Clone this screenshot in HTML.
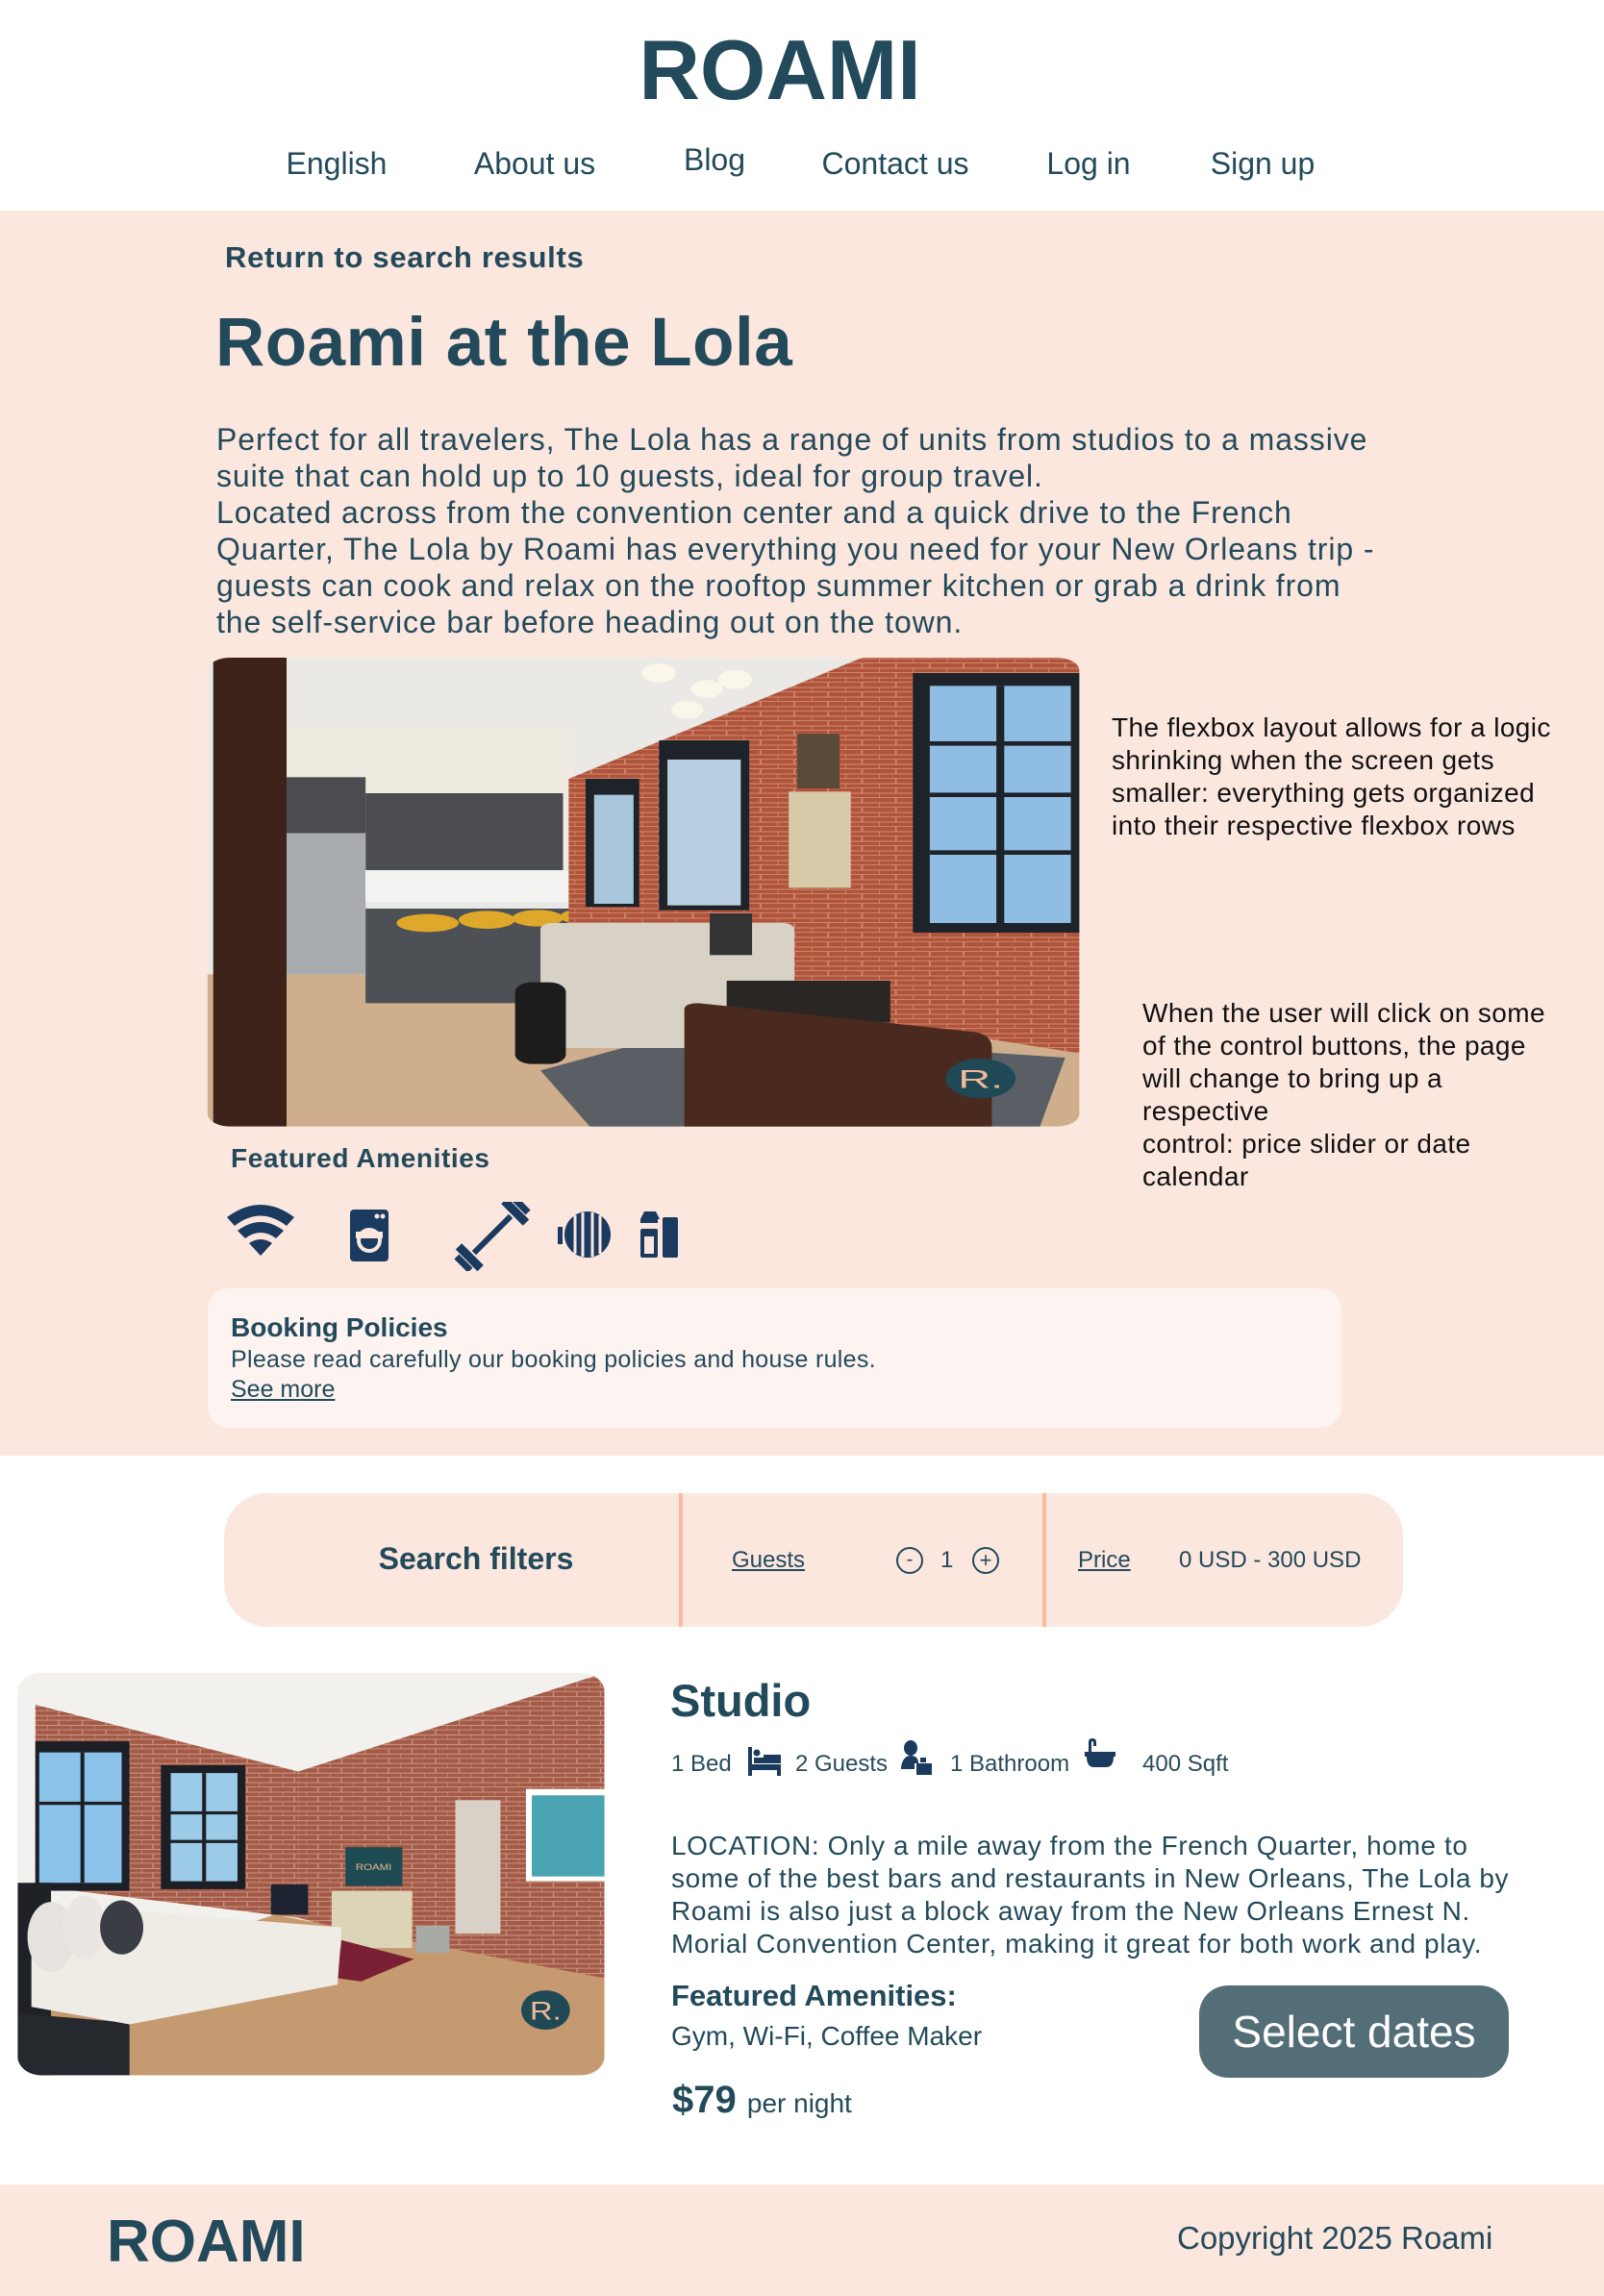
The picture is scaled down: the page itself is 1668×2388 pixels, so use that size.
<!DOCTYPE html>
<html><head><meta charset="utf-8"><style>
*{margin:0;padding:0;box-sizing:border-box}
body{width:1668px;height:2388px;position:relative;background:#fff;font-family:"Liberation Sans",sans-serif;color:#234a5a;overflow:hidden}
.a{position:absolute;white-space:nowrap}
.c{transform:translateX(-50%)}
.nav{font-size:32px;top:152px}
.b{font-weight:bold}
</style></head><body>
<div class="a c b" style="left:811px;top:22px;font-size:88px;color:#234a5a;letter-spacing:0px">ROAMI</div>
<div class="a c nav" style="left:350px">English</div>
<div class="a c nav" style="left:556px">About us</div>
<div class="a c nav" style="left:743px;top:148px">Blog</div>
<div class="a c nav" style="left:931px">Contact us</div>
<div class="a c nav" style="left:1132px">Log in</div>
<div class="a c nav" style="left:1313px">Sign up</div>

<div class="a" style="left:0;top:219px;width:1668px;height:1295px;background:#fce7df"></div>
<div class="a b" style="left:234px;top:250px;font-size:31px;letter-spacing:0.7px">Return to search results</div>
<div class="a b" style="left:224px;top:316px;font-size:71px;letter-spacing:0.5px">Roami at the Lola</div>
<div class="a" style="left:225px;top:438px;font-size:32px;line-height:38px;letter-spacing:0.9px">Perfect for all travelers, The Lola has a range of units from studios to a massive<br>suite that can hold up to 10 guests, ideal for group travel.<br>Located across from the convention center and a quick drive to the French<br>Quarter, The Lola by Roami has everything you need for your New Orleans trip -<br>guests can cook and relax on the rooftop summer kitchen or grab a drink from<br>the self-service bar before heading out on the town.</div>

<svg class="a" style="left:210px;top:680px" width="920" height="500" viewBox="0 0 1568 1500" preserveAspectRatio="none">
<defs><clipPath id="c1"><rect x="10" y="12" width="1545" height="1463" rx="40"/></clipPath>
<pattern id="br" width="60" height="30" patternUnits="userSpaceOnUse"><rect width="60" height="30" fill="#b0553c"/><path d="M0 29H60M30 0V15M0 15H60M0 15V30" stroke="#d08a70" stroke-width="3"/></pattern></defs>
<g clip-path="url(#c1)">
<rect width="1568" height="1500" fill="#ebe9e5"/>
<rect x="150" y="230" width="510" height="770" fill="#f0ebe0"/>
<rect x="150" y="385" width="140" height="175" fill="#4a4c50"/>
<rect x="290" y="435" width="350" height="240" fill="#4a4c50"/>
<rect x="148" y="560" width="142" height="440" fill="#a9acae"/>
<rect x="290" y="675" width="360" height="105" fill="#f2f2f0"/>
<polygon points="0,1000 1568,1000 1568,1500 0,1500" fill="#cfae8d"/>
<rect x="290" y="780" width="420" height="310" fill="#4d5054"/>
<rect x="290" y="775" width="420" height="20" fill="#e8e8e6"/>
<ellipse cx="400" cy="840" rx="55" ry="28" fill="#e0a82a"/><ellipse cx="505" cy="830" rx="50" ry="28" fill="#e0a82a"/><ellipse cx="595" cy="825" rx="45" ry="26" fill="#e0a82a"/><ellipse cx="675" cy="820" rx="40" ry="24" fill="#e0a82a"/>
<polygon points="650,390 1170,12 1568,12 1568,1250 1210,1150 650,1000" fill="url(#br)"/>
<rect x="680" y="390" width="95" height="400" fill="#1e232a"/><rect x="695" y="440" width="70" height="340" fill="#a9c6dc"/>
<rect x="810" y="270" width="160" height="530" fill="#1e232a"/><rect x="825" y="330" width="130" height="455" fill="#b7cfe0"/>
<rect x="1260" y="60" width="300" height="810" fill="#1e232a"/><rect x="1290" y="100" width="250" height="740" fill="#8fbde3"/>
<path d="M1415 100V840M1290 280H1540M1290 440H1540M1290 620H1540" stroke="#1e232a" stroke-width="14"/>
<rect x="1040" y="430" width="110" height="300" fill="#d8c9a8"/>
<rect x="1055" y="250" width="75" height="170" fill="#5a4a3a"/>
<rect x="20" y="12" width="130" height="1463" fill="#3d2219"/>
<polygon points="600,1300 850,1180 1530,1260 1480,1500 700,1500" fill="#5a5f66"/>
<rect x="600" y="840" width="450" height="390" rx="20" fill="#d8d2c6"/>
<rect x="900" y="810" width="75" height="130" fill="#333"/>
<rect x="555" y="1025" width="90" height="255" rx="30" fill="#1c1c1c"/>
<rect x="930" y="1020" width="290" height="130" fill="#2a2624"/>
<path d="M855 1500V1110Q855 1090 880 1090L1370 1180Q1400 1190 1400 1230V1500Z" fill="#4a2a1e"/>
<circle cx="810" cy="60" r="30" fill="#fbf6ea"/><circle cx="945" cy="80" r="30" fill="#fbf6ea"/><circle cx="895" cy="110" r="28" fill="#fbf6ea"/><circle cx="860" cy="175" r="28" fill="#fbf6ea"/>
<circle cx="1380" cy="1325" r="62" fill="#1f4a55"/>
<text x="1380" y="1355" font-family="Liberation Sans" font-size="80" fill="#f2b89a" text-anchor="middle">R.</text>
</g></svg>

<div class="a" style="left:1156px;top:740px;font-size:28px;line-height:34px;color:#111;letter-spacing:0.4px">The flexbox layout allows for a logic<br>shrinking when the screen gets<br>smaller: everything gets organized<br>into their respective flexbox rows</div>
<div class="a" style="left:1188px;top:1037px;font-size:28px;line-height:34px;color:#111;letter-spacing:0.4px">When the user will click on some<br>of the control buttons, the page<br>will change to bring up a<br>respective<br>control: price slider or date<br>calendar</div>

<div class="a b" style="left:240px;top:1189px;font-size:28px;letter-spacing:0.6px">Featured Amenities</div>
<svg class="a" style="left:230px;top:1250px" width="520" height="72" viewBox="0 0 520 72" fill="#1b3a60">
<path d="M6 16Q41 -10 76 16L68 25Q41 4 14 25Z"/><path d="M17 30Q41 12 65 30L57 38Q41 26 25 38Z"/><path d="M29 43Q41 35 53 43L41 56Z"/>
<rect x="134" y="8" width="40" height="54" rx="4"/><circle cx="154" cy="40" r="13" fill="#fce7df"/><circle cx="154" cy="40" r="9"/><rect x="140" y="31" width="28" height="7" fill="#fce7df"/><circle cx="162" cy="15" r="2.5" fill="#fce7df"/><circle cx="168" cy="15" r="2.5" fill="#fce7df"/>
<g transform="rotate(-45 282 34)"><rect x="255" y="31" width="54" height="6"/><rect x="244" y="18" width="9" height="32"/><rect x="236" y="24" width="7" height="20"/><rect x="311" y="18" width="9" height="32"/><rect x="321" y="24" width="7" height="20"/></g>
<circle cx="381" cy="34" r="24"/><path d="M368 14V54M376 11V57M386 11V57M394 14V54" stroke="#fce7df" stroke-width="3"/><rect x="350" y="26" width="5" height="18"/>
<path d="M440 10H452L456 18H436Z"/><rect x="436" y="18" width="18" height="4"/><rect x="436" y="28" width="18" height="30" rx="2"/><rect x="440" y="36" width="10" height="18" fill="#fce7df"/><rect x="459" y="16" width="16" height="42" rx="2"/>
</svg>

<div class="a" style="left:216px;top:1340px;width:1179px;height:145px;background:#fdf3f0;border-radius:22px"></div>
<div class="a b" style="left:240px;top:1365px;font-size:28px">Booking Policies</div>
<div class="a" style="left:240px;top:1400px;font-size:25px;letter-spacing:0.3px">Please read carefully our booking policies and house rules.</div>
<div class="a" style="left:240px;top:1431px;font-size:25px;text-decoration:underline">See more</div>

<div class="a" style="left:233px;top:1553px;width:1226px;height:139px;background:#fce7df;border-radius:45px"></div>
<div class="a" style="left:706px;top:1553px;width:4px;height:139px;background:#f8bb9b"></div>
<div class="a" style="left:1084px;top:1553px;width:4px;height:139px;background:#f8bb9b"></div>
<div class="a c b" style="left:495px;top:1603px;font-size:32px">Search filters</div>
<div class="a" style="left:761px;top:1609px;font-size:24px;text-decoration:underline">Guests</div>
<div class="a" style="left:932px;top:1609px;width:28px;height:28px;border:2px solid #234a5a;border-radius:50%;font-size:20px;line-height:23px;text-align:center">-</div>
<div class="a" style="left:978px;top:1609px;font-size:24px">1</div>
<div class="a" style="left:1011px;top:1609px;width:28px;height:28px;border:2px solid #234a5a;border-radius:50%;font-size:22px;line-height:23px;text-align:center">+</div>
<div class="a" style="left:1121px;top:1609px;font-size:24px;text-decoration:underline">Price</div>
<div class="a" style="left:1226px;top:1609px;font-size:24px">0 USD - 300 USD</div>

<svg class="a" style="left:0;top:1730px" width="640" height="440" viewBox="0 0 1568 1330" preserveAspectRatio="none">
<defs><clipPath id="c2"><rect x="45" y="30" width="1495" height="1265" rx="60"/></clipPath>
<pattern id="br2" width="60" height="30" patternUnits="userSpaceOnUse"><rect width="60" height="30" fill="#a45a46"/><path d="M0 29H60M30 0V15M0 15H60M0 15V30" stroke="#c99a88" stroke-width="3"/></pattern></defs>
<g clip-path="url(#c2)">
<rect width="1568" height="1330" fill="#f2f1ee"/>
<polygon points="90,130 760,340 760,800 90,700" fill="url(#br2)"/>
<polygon points="760,340 1540,30 1540,990 1000,880 760,800" fill="url(#br2)"/>
<rect x="90" y="245" width="240" height="470" fill="#1c2026"/><rect x="100" y="280" width="210" height="410" fill="#8cc3ea"/>
<rect x="410" y="320" width="215" height="390" fill="#1c2026"/><rect x="435" y="345" width="170" height="340" fill="#9ccbea"/>
<path d="M210 280V690M100 440H310M520 345V685M435 470H605M435 560H605" stroke="#1c2026" stroke-width="10"/>
<polygon points="45,1050 700,790 1540,990 1540,1330 45,1330" fill="#c59a70"/>
<rect x="690" y="695" width="95" height="95" fill="#1c2230"/>
<rect x="880" y="578" width="145" height="122" fill="#1e4a52"/>
<text x="952" y="650" font-family="Liberation Sans" font-size="28" fill="#e8b89a" text-anchor="middle">ROAMI</text>
<rect x="845" y="715" width="205" height="180" fill="#ddd4b8"/>
<rect x="1060" y="825" width="85" height="85" fill="#a8aaa6"/>
<rect x="1160" y="430" width="115" height="420" fill="#d9d1c7"/>
<rect x="1340" y="395" width="200" height="290" fill="#fff"/><rect x="1355" y="415" width="185" height="255" fill="#4aa3b0"/>
<polygon points="870,870 1055,930 920,1000 860,990" fill="#7a2035"/>
<rect x="45" y="690" width="85" height="605" fill="#1e2226"/>
<polygon points="45,1100 330,1130 330,1330 45,1330" fill="#25282c"/>
<polygon points="80,840 355,780 870,830 860,1010 330,1135 80,1080" fill="#efece6"/>
<ellipse cx="130" cy="860" rx="60" ry="110" fill="#e6e2de"/><ellipse cx="215" cy="830" rx="55" ry="100" fill="#ebe6e2"/><ellipse cx="310" cy="830" rx="55" ry="85" fill="#3a3e44"/>
<circle cx="1390" cy="1090" r="62" fill="#1f4a55"/>
<text x="1390" y="1120" font-family="Liberation Sans" font-size="80" fill="#f2b89a" text-anchor="middle">R.</text>
</g></svg>

<div class="a b" style="left:697px;top:1741px;font-size:47px">Studio</div>
<div class="a" style="left:698px;top:1821px;font-size:24px;color:#2a4a5a">1 Bed</div>
<svg class="a" style="left:778px;top:1815px" width="36" height="32" viewBox="0 0 36 32" fill="#1b3a60"><rect x="0" y="2" width="4" height="30"/><circle cx="9" cy="8" r="3.5"/><rect x="6" y="13" width="10" height="6"/><rect x="16" y="10" width="18" height="9"/><rect x="0" y="20" width="34" height="6"/><rect x="30" y="20" width="4" height="12"/></svg>
<div class="a" style="left:827px;top:1821px;font-size:24px;color:#2a4a5a">2 Guests</div>
<svg class="a" style="left:935px;top:1810px" width="36" height="36" viewBox="0 0 36 36" fill="#1b3a60"><ellipse cx="12" cy="8" rx="7" ry="8"/><path d="M2 28Q4 16 12 16Q20 16 20 24H16V30H2Z"/><rect x="18" y="24" width="16" height="12"/><rect x="22" y="18" width="6" height="5"/></svg>
<div class="a" style="left:988px;top:1821px;font-size:24px;color:#2a4a5a">1 Bathroom</div>
<svg class="a" style="left:1128px;top:1808px" width="32" height="32" viewBox="0 0 32 32" fill="#1b3a60"><path d="M4 4Q4 0 8 0Q12 0 12 4V8H9V4Q9 3 8 3Q7 3 7 4V14H4Z"/><rect x="0" y="14" width="32" height="5"/><path d="M2 19H30Q30 30 22 30H10Q2 30 2 19Z"/></svg>
<div class="a" style="left:1188px;top:1821px;font-size:24px;color:#2a4a5a">400 Sqft</div>

<div class="a" style="left:698px;top:1903px;font-size:28px;line-height:34px;letter-spacing:0.6px">LOCATION: Only a mile away from the French Quarter, home to<br>some of the best bars and restaurants in New Orleans, The Lola by<br>Roami is also just a block away from the New Orleans Ernest N.<br>Morial Convention Center, making it great for both work and play.</div>
<div class="a b" style="left:698px;top:2058px;font-size:31px">Featured Amenities:</div>
<div class="a" style="left:698px;top:2102px;font-size:28px">Gym, Wi-Fi, Coffee Maker</div>
<div class="a" style="left:1247px;top:2065px;width:322px;height:96px;background:#546e78;border-radius:30px;color:#fff;font-size:46px;text-align:center;line-height:96px">Select dates</div>
<div class="a" style="left:699px;top:2162px;font-size:40px"><b>$79</b> <span style="font-size:28px">per night</span></div>

<div class="a" style="left:0;top:2272px;width:1668px;height:116px;background:#fce7df"></div>
<div class="a b" style="left:111px;top:2296px;font-size:62px">ROAMI</div>
<div class="a" style="left:1224px;top:2309px;font-size:33px">Copyright 2025 Roami</div>
</body></html>
